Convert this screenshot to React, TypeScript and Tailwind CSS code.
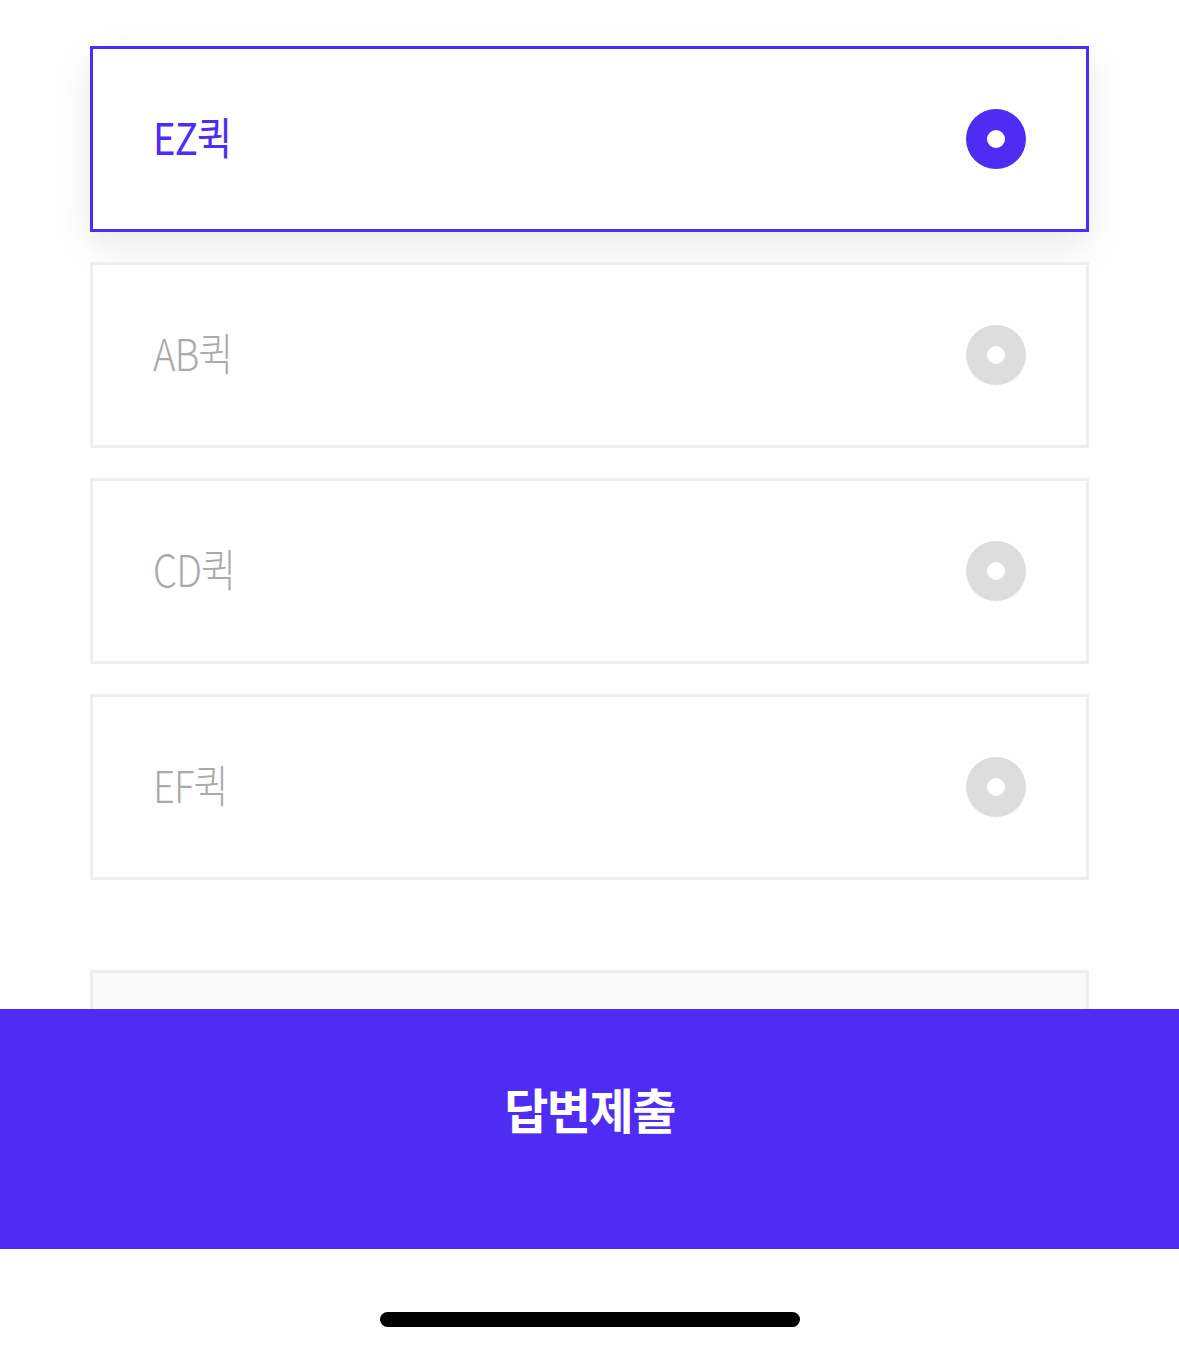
import React from "react";

const options = [
  { label: "EZ퀵", selected: true },
  { label: "AB퀵", selected: false },
  { label: "CD퀵", selected: false },
  { label: "EF퀵", selected: false },
];

function Radio({ selected }: { selected: boolean }) {
  return (
    <div
      className={
        "flex h-[60px] w-[60px] items-center justify-center rounded-full " +
        (selected ? "bg-[#4f2cf4]" : "bg-[#dddddd]")
      }
    >
      <div className="h-[18px] w-[18px] rounded-full bg-white" />
    </div>
  );
}

export default function App() {
  return (
    <div
      className="flex h-[1351px] w-full flex-col bg-white"
      style={{ fontFamily: '"Noto Sans CJK KR", "Noto Sans", sans-serif' }}
    >
      <div className="flex h-[1009px] flex-col gap-[30px] overflow-hidden px-[90px] pt-[46px]">
        {options.map((o) => (
          <div
            key={o.label}
            className={
              "flex h-[186px] shrink-0 items-center justify-between border-[3px] bg-white pl-[60px] pr-[60px] " +
              (o.selected
                ? "border-[#4f2cf4] shadow-[0_14px_36px_rgba(0,0,0,0.09)]"
                : "border-[#eeeeee]")
            }
          >
            <span
              className={
                "-mt-[6px] origin-left scale-x-[0.87] text-[44px] leading-none tracking-[-1px] " +
                (o.selected ? "font-normal text-[#4f2cf4]" : "font-light text-[#aaaaaa]")
              }
            >
              {o.label}
            </span>
            <Radio selected={o.selected} />
          </div>
        ))}
        <div className="mt-[60px] h-[186px] shrink-0 border-[3px] border-[#eeeeee] bg-[#f9f9f9]" />
      </div>
      <div className="flex h-[240px] shrink-0 items-start justify-center bg-[#4f2cf4] pt-[75px]">
        <span className="text-[48px] font-bold leading-none tracking-[-1.5px] text-white">답변제출</span>
      </div>
      <div className="flex flex-1 items-start justify-center pt-[63px]">
        <div className="h-[15px] w-[420px] rounded-full bg-black" />
      </div>
    </div>
  );
}
